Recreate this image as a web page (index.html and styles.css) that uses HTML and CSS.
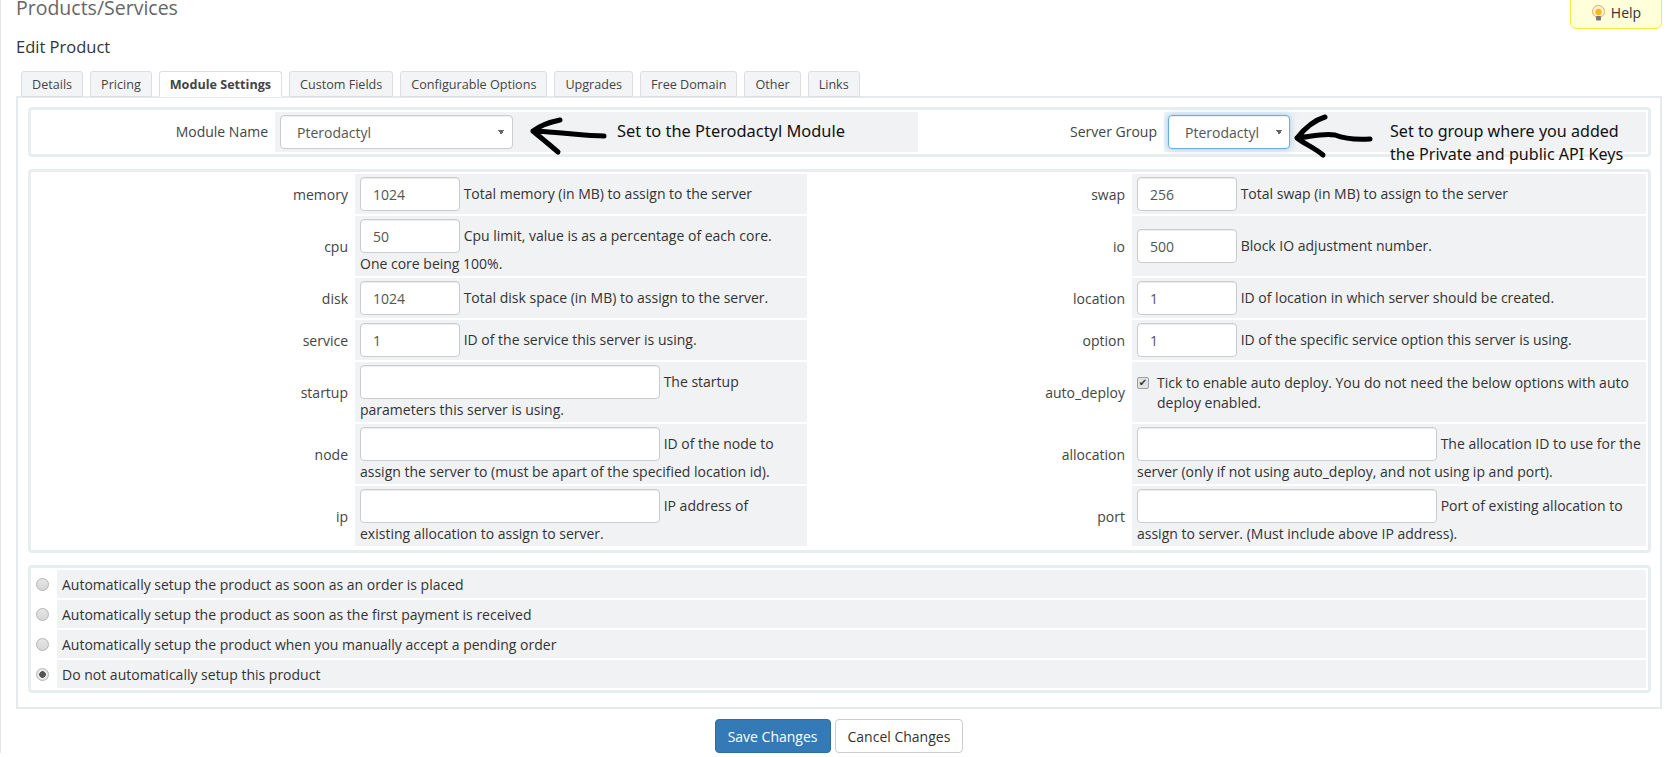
FILE: index.html
```html
<!DOCTYPE html>
<html lang="en">
<head>
  <meta charset="UTF-8">
  <title>Products/Services</title>
  <link rel="stylesheet" href="styles.css">
</head>
<body>

  <div class="page">
    <div class="topbar">
      <h1>Products/Services</h1>
      <a class="help-btn" href="#">
        <svg class="bulb" width="15" height="16" viewBox="0 0 15 16">
          <circle cx="7.5" cy="6.5" r="6" fill="#fdf3d0" stroke="#e8a860" stroke-width="1"/>
          <circle cx="7.5" cy="7" r="3.2" fill="#f9b820"/>
          <rect x="5" y="11" width="5" height="4.5" rx="1" fill="#77797c"/>
        </svg>
        Help
      </a>
    </div>

    <h2>Edit Product</h2>

    <ul class="tabs">
      <li><a href="#">Details</a></li>
      <li><a href="#">Pricing</a></li>
      <li class="active"><a href="#">Module Settings</a></li>
      <li><a href="#">Custom Fields</a></li>
      <li><a href="#">Configurable Options</a></li>
      <li><a href="#">Upgrades</a></li>
      <li><a href="#">Free Domain</a></li>
      <li><a href="#">Other</a></li>
      <li><a href="#">Links</a></li>
    </ul>

    <div class="panel">
      <div class="box module-grid">
        <div class="label">Module Name</div>
        <div class="field">
          <select class="select select-module"><option>Pterodactyl</option></select>
        </div>
        <div class="label">Server Group</div>
        <div class="field">
          <select class="select select-group"><option>Pterodactyl</option></select>
        </div>
      </div>

      <div class="box options-grid">
        <div class="label">memory</div>
        <div class="field"><div><input class="input short" type="text" value="1024"> Total memory (in MB) to assign to the server</div></div>
        <div class="label">swap</div>
        <div class="field"><div><input class="input short" type="text" value="256"> Total swap (in MB) to assign to the server</div></div>

        <div class="label">cpu</div>
        <div class="field"><div><input class="input short" type="text" value="50"> Cpu limit, value is as a percentage of each core. One core being 100%.</div></div>
        <div class="label">io</div>
        <div class="field centered"><div><input class="input short" type="text" value="500"> Block IO adjustment number.</div></div>

        <div class="label">disk</div>
        <div class="field"><div><input class="input short" type="text" value="1024"> Total disk space (in MB) to assign to the server.</div></div>
        <div class="label">location</div>
        <div class="field"><div><input class="input short" type="text" value="1"> ID of location in which server should be created.</div></div>

        <div class="label">service</div>
        <div class="field"><div><input class="input short" type="text" value="1"> ID of the service this server is using.</div></div>
        <div class="label">option</div>
        <div class="field"><div><input class="input short" type="text" value="1"> ID of the specific service option this server is using.</div></div>

        <div class="label">startup</div>
        <div class="field"><div><input class="input long" type="text"> The startup parameters this server is using.</div></div>
        <div class="label">auto_deploy</div>
        <div class="field">
          <label class="check-label"><input class="check" type="checkbox" checked>Tick to enable auto deploy. You do not need the below options with auto deploy enabled.</label>
        </div>

        <div class="label">node</div>
        <div class="field"><div><input class="input long" type="text"> ID of the node to assign the server to (must be apart of the specified location id).</div></div>
        <div class="label">allocation</div>
        <div class="field"><div><input class="input long" type="text"> The allocation ID to use for the server (only if not using auto_deploy, and not using ip and port).</div></div>

        <div class="label">ip</div>
        <div class="field"><div><input class="input long" type="text"> IP address of<br>existing allocation to assign to server.</div></div>
        <div class="label">port</div>
        <div class="field"><div><input class="input long" type="text"> Port of existing allocation to assign to server. (Must include above IP address).</div></div>
      </div>

      <div class="box radio-grid">
        <div class="radio-cell"><input class="radio" type="radio" name="autosetup"></div>
        <div class="field">Automatically setup the product as soon as an order is placed</div>
        <div class="radio-cell"><input class="radio" type="radio" name="autosetup"></div>
        <div class="field">Automatically setup the product as soon as the first payment is received</div>
        <div class="radio-cell"><input class="radio" type="radio" name="autosetup"></div>
        <div class="field">Automatically setup the product when you manually accept a pending order</div>
        <div class="radio-cell"><input class="radio" type="radio" name="autosetup" checked></div>
        <div class="field">Do not automatically setup this product</div>
      </div>
    </div>

    <div class="actions">
      <button class="btn btn-primary">Save Changes</button>
      <button class="btn">Cancel Changes</button>
    </div>
  </div>

  <!-- hand drawn notes on top of the form -->
  <svg class="arrow arrow-module" width="84" height="46" viewBox="526 113 84 46">
    <path d="M604 136 C585 136 560 132 533 131 M560 120 C550 122 541 125 533 131 C540 137 550 145 558 152"/>
  </svg>
  <div class="note note-module">Set to the Pterodactyl Module</div>

  <svg class="arrow arrow-group" width="84" height="48" viewBox="1291 112 84 48">
    <path d="M1370 139 C1355 140 1345 139 1335 135 C1322 133 1310 137 1297 138 M1325 117 C1315 120 1305 128 1297 138 C1303 143 1315 148 1323 155"/>
  </svg>
  <div class="note note-group">Set to group where you added<br>the Private and public API Keys</div>

</body>
</html>
```

FILE: styles.css
```css
body {
  margin: 0;
  height: 757px;
  overflow: hidden;
  position: relative;
  background-color: #ffffff;
  color: #333333;
  font-family: 'Open Sans', sans-serif;
  font-size: 14px;
  line-height: 20px;
}

.page {
  border-left: 1px solid #e3e6e8;
  padding: 0 6px 0 15px;
}

.topbar {
  display: flex;
  justify-content: space-between;
  align-items: flex-start;
  height: 44px;
  margin-top: -7px;
}

h1 {
  margin: 0;
  color: #666666;
  font-size: 19.5px;
  font-weight: 400;
  line-height: 30px;
}

h2 {
  margin: 0 0 14px;
  color: #333333;
  font-size: 16.5px;
  font-weight: 400;
  line-height: 20px;
}

.help-btn {
  display: flex;
  align-items: center;
  justify-content: center;
  gap: 5px;
  box-sizing: border-box;
  width: 92px;
  height: 36px;
  padding-top: 4px;
  background-color: #ffffd9;
  border: 1px solid #f4ec3c;
  border-radius: 6px;
  color: #333333;
  text-decoration: none;
}

/* tabs */
.tabs {
  display: flex;
  gap: 7px;
  margin: 0 0 -1px;
  padding: 0 0 0 5px;
  list-style: none;
  position: relative;
}

.tabs li {
  height: 26px;
}

.tabs a {
  display: block;
  box-sizing: border-box;
  height: 26px;
  padding: 3px 10px 0;
  background-color: #f3f4f5;
  border: 1px solid #dcdfe1;
  border-radius: 3px 3px 0 0;
  color: #444444;
  font-size: 12.6px;
  text-decoration: none;
}

.tabs .active a {
  background-color: #ffffff;
  border-bottom-color: #ffffff;
  font-weight: 700;
}

.panel {
  display: flex;
  flex-direction: column;
  gap: 12px;
  box-sizing: border-box;
  height: 613px;
  padding: 9px 9px 0 10px;
  border: 2px solid #e7eaec;
}

/* form tables */
.box {
  display: grid;
  gap: 2px;
  padding: 2px;
  border: 3px solid #e8edf0;
  border-radius: 4px;
}

.module-grid {
  grid-template-columns: 240px 643px 242px 482px;
  grid-template-rows: 40px;
}

.options-grid {
  grid-template-columns: 320px 452px 321px 514px;
  grid-template-rows: 40px 60px 40px 40px 60px 60px 60px;
  padding-bottom: 4px;
}

.radio-grid {
  grid-template-columns: 22px 1fr;
  grid-auto-rows: 28px;
}

.label {
  display: flex;
  align-items: center;
  justify-content: flex-end;
  padding: 2px 5px 0 0;
  color: #444444;
}

.field {
  display: flex;
  align-items: center;
  padding: 2px 5px 0;
  background-color: #f0f2f4;
}

.field > div {
  align-self: flex-start;
  margin-top: 1px;
  line-height: 18px;
}

.field.centered > div {
  align-self: center;
  margin-top: 0;
}

.module-grid .label,
.module-grid .field {
  padding-top: 0;
}

.input,
.select {
  box-sizing: border-box;
  height: 34px;
  padding: 6px 12px;
  background-color: #ffffff;
  border: 1px solid #cccccc;
  border-radius: 4px;
  box-shadow: inset 0 1px 1px rgba(0, 0, 0, 0.075);
  color: #555555;
  font-family: 'Open Sans', sans-serif;
  font-size: 14px;
  vertical-align: middle;
}

.input {
  margin-bottom: 2px;
}

.short {
  width: 100px;
}

.long {
  width: 300px;
}

.select {
  appearance: none;
  padding-left: 16px;
  background-image: linear-gradient(to top right, transparent 50%, #666666 50%), linear-gradient(to top left, transparent 50%, #666666 50%);
  background-size: 3px 5px;
  background-repeat: no-repeat;
}

.select-module {
  width: 233px;
  background-position: right 11px top 14px, right 8px top 14px;
}

.select-group {
  width: 122px;
  margin-left: -1px;
  border-color: #66afe9;
  box-shadow: inset 0 1px 1px rgba(0, 0, 0, 0.075), 0 0 6px rgba(102, 175, 233, 0.6);
  background-position: right 10px top 14px, right 7px top 14px;
}

.check-label {
  position: relative;
  padding-left: 20px;
  display: block;
}

.check {
  appearance: none;
  position: absolute;
  left: 0;
  top: 4px;
  width: 12px;
  height: 12px;
  margin: 0;
  background-color: #e2e2e2;
  border: 1px solid #a0a0a0;
  border-radius: 2px;
}

.check::after {
  content: "\2714";
  display: block;
  color: #333333;
  font-family: 'DejaVu Sans', sans-serif;
  font-size: 10px;
  line-height: 10px;
  text-align: center;
}

.radio-cell {
  display: flex;
  align-items: center;
}

.radio {
  appearance: none;
  width: 13px;
  height: 13px;
  margin: 0 0 0 3px;
  background: linear-gradient(#e6e6e6, #d6d6d6);
  border: 1px solid #b4b4b4;
  border-radius: 50%;
}

.radio:checked {
  background: radial-gradient(circle, #555555 0, #555555 3px, #e8e8e8 3.6px);
}

.actions {
  display: flex;
  justify-content: center;
  gap: 4px;
  margin-top: 10px;
}

.btn {
  box-sizing: border-box;
  height: 34px;
  padding: 0 12px;
  background-color: #ffffff;
  border: 1px solid #cccccc;
  border-radius: 4px;
  color: #333333;
  font-family: 'Open Sans', sans-serif;
  font-size: 14px;
}

.btn-primary {
  background-color: #337ab7;
  border-color: #2e6da4;
  color: #ffffff;
}

/* annotations drawn over the form */
.arrow {
  position: absolute;
  fill: none;
  stroke: #000000;
  stroke-width: 5;
  stroke-linecap: round;
  stroke-linejoin: round;
}

.arrow-module {
  left: 526px;
  top: 113px;
}

.arrow-group {
  left: 1291px;
  top: 112px;
}

.note {
  position: absolute;
  color: #111111;
  font-family: 'Noto Sans', sans-serif;
  font-size: 16.1px;
  line-height: 23px;
}

.note-module {
  left: 617px;
  top: 119px;
  font-size: 16.4px;
}

.note-group {
  left: 1390px;
  top: 120px;
}
```
